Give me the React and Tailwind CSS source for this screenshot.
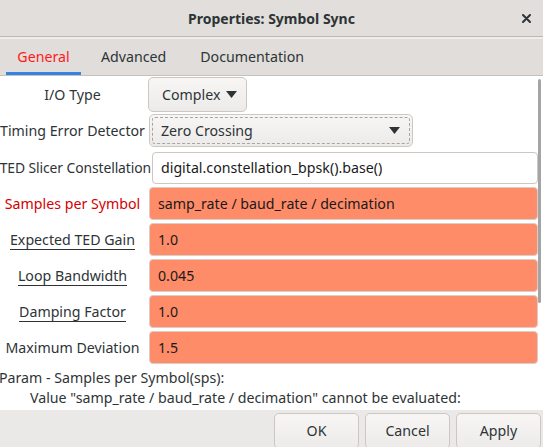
import React from "react";

const font = { fontFamily: '"Noto Sans", "Open Sans", sans-serif' };

function Label({ children, red, underline }) {
  return (
    <div className="w-[145px] shrink-0 flex items-center justify-center whitespace-nowrap">
      <span
        className={`${red ? "text-[#d40000]" : "text-[#2e3436]"} ${
          underline ? "border-b border-[#2e3436] leading-[19px]" : ""
        }`}
      >
        {children}
      </span>
    </div>
  );
}

function Entry({ value, error }) {
  return (
    <div
      className={`flex-1 h-full flex items-center pl-[8px] rounded-[4px] border ${
        error ? "bg-[#ff8c69] border-[#d9cfc8] text-[#1a1a1a]" : "bg-white border-[#cdc7c2] text-[#1a1a1a]"
      }`}
    >
      {value}
    </div>
  );
}

function Caret() {
  return (
    <svg width="11" height="7" viewBox="0 0 11 7" className="shrink-0">
      <path d="M0 0 H11 L5.5 7 Z" fill="#2e3436" />
    </svg>
  );
}

export default function App() {
  return (
    <div
      style={font}
      className="w-[543px] h-[447px] overflow-hidden flex flex-col bg-white text-[14.2px] text-[#2e3436]"
    >
      {/* Title bar */}
      <div className="h-[37px] shrink-0 relative flex items-center justify-center bg-[#e1dedb] border-b border-[#bfb8b1]">
        <span className="font-bold text-[14px] text-[#2e3436]">Properties: Symbol Sync</span>
        <svg width="9" height="9" viewBox="0 0 9 9" className="absolute left-[522px] top-[14px]">
          <path d="M1 1 L8 8 M8 1 L1 8" stroke="#2e3436" strokeWidth="2" strokeLinecap="round" />
        </svg>
      </div>

      {/* Tabs */}
      <div className="h-[39px] shrink-0 flex items-stretch bg-[#e0ddda] border-t-2 border-t-[#efedeb] border-b border-b-[#c8c1ba] pl-[6px]">
        <div className="w-[75px] flex items-center justify-center border-b-[3px] border-[#3584e4] text-[#ff1a1a] pt-[3px]">
          General
        </div>
        <div className="ml-[20px] flex items-center text-[#2e3436]">Advanced</div>
        <div className="ml-[34px] flex items-center text-[#2e3436]">Documentation</div>
      </div>

      {/* Content */}
      <div className="flex-1 min-h-0 relative">
        <div className="absolute right-[2px] top-[3px] w-[3px] h-[224px] bg-[#a4a4a4] rounded-full" />
        <div className="flex flex-col pt-[1px] pr-[5px]">
          <div className="h-[35px] flex">
            <Label>I/O Type</Label>
            <div className="ml-[3px] w-[99px] h-full flex items-center gap-[6px] pl-[13px] rounded-[5px] border border-[#cdc7c2] bg-gradient-to-b from-[#f7f6f5] to-[#edebe9]">
              <span>Complex</span>
              <Caret />
            </div>
          </div>

          <div className="h-[33px] mt-[2px] flex">
            <Label>Timing Error Detector</Label>
            <div className="ml-[4px] w-[264px] h-full p-[2px] rounded-[5px] border border-[#cdc7c2] bg-gradient-to-b from-[#f7f6f5] to-[#edebe9]">
              <div className="h-full flex items-center justify-between pl-[8px] pr-[9px] rounded-[3px] border border-dashed border-[#a9a49f]">
                <span>Zero Crossing</span>
                <Caret />
              </div>
            </div>
          </div>

          <div className="h-[32px] mt-[5px] flex">
            <div className="w-[152px] shrink-0 flex items-center justify-end whitespace-nowrap pr-[1px] text-[13.9px] tracking-[-0.1px]">
              TED Slicer Constellation
            </div>
            <Entry value="digital.constellation_bpsk().base()" />
          </div>

          <div className="h-[33px] mt-[3px] flex">
            <Label red>Samples per Symbol</Label>
            <div className="ml-[4px] flex-1 h-full flex">
              <Entry value="samp_rate / baud_rate / decimation" error />
            </div>
          </div>

          {[
            ["Expected TED Gain", "1.0", true],
            ["Loop Bandwidth", "0.045", true],
            ["Damping Factor", "1.0", true],
            ["Maximum Deviation", "1.5", false],
          ].map(([label, value, u]) => (
            <div key={label} className="h-[33px] mt-[3px] flex">
              <Label underline={u}>{label}</Label>
              <div className="ml-[4px] flex-1 h-full flex">
                <Entry value={value} error />
              </div>
            </div>
          ))}
        </div>

        {/* Error message */}
        <div className="pt-[4px] leading-[20px] whitespace-nowrap text-[#2e3436]">
          <div className="-ml-[1px]">Param - Samples per Symbol(sps):</div>
          <div className="ml-[30px]">Value "samp_rate / baud_rate / decimation" cannot be evaluated:</div>
        </div>
      </div>

      {/* Buttons */}
      <div className="h-[37px] shrink-0 flex justify-end gap-[6px] pt-[3px] pr-[2px] bg-[#ebe9e7]">
        {["OK", "Cancel", "Apply"].map((b) => (
          <div
            key={b}
            className="w-[85px] h-[36px] shrink-0 flex items-center justify-center rounded-[5px] border border-[#cdc7c2] bg-gradient-to-b from-[#f7f6f5] to-[#edebe9] text-[#2e3436]"
          >
            {b}
          </div>
        ))}
      </div>
    </div>
  );
}
